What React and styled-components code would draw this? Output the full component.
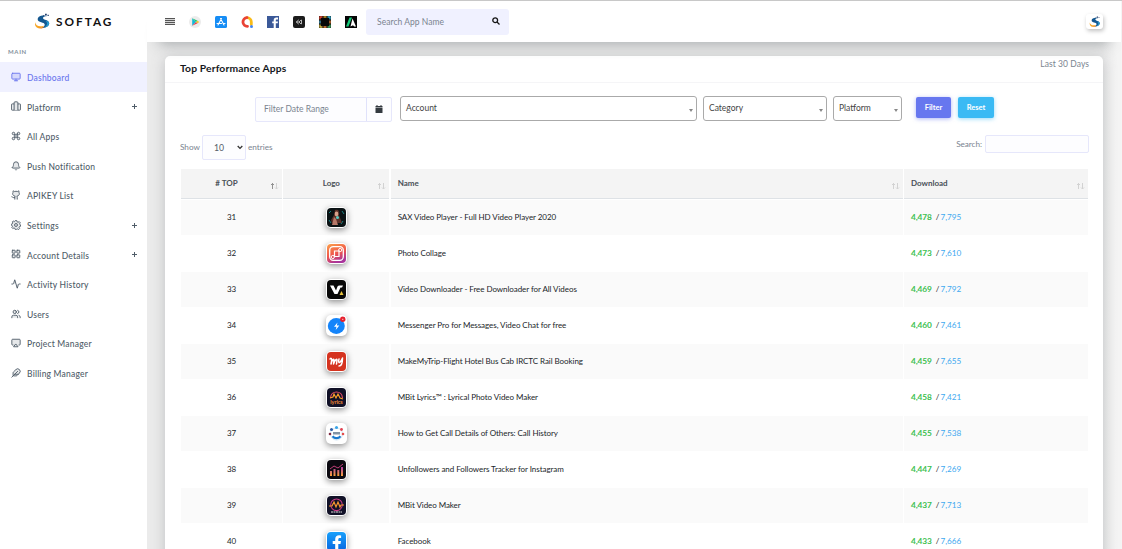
import React from "react";
import styled, { createGlobalStyle, css } from "styled-components";
import { Monitor, Command, Bell, Github, LayoutGrid, Activity, Users, Airplay, Feather } from "lucide-react";

const Global = createGlobalStyle`
  *, *::before, *::after { box-sizing: border-box; }
  body { margin: 0; overflow: hidden; background: #ebebeb; font-family: Lato, "Open Sans", sans-serif; color: #212529; font-size: 8px; }
  button, input, select { font-family: inherit; }
`;

const Page = styled.div`
  display: flex;
  width: 1122px;
  height: 549px;
  overflow: hidden;
  border-top: 1px solid #c8c8c8;
`;
const Sidebar = styled.aside`
  width: 147px;
  flex: none;
  background: #fff;
`;
const Brand = styled.div`
  display: flex;
  align-items: center;
  height: 41px;
  padding: 0 0 0 34px;
  gap: 5px;
`;
const BrandName = styled.span`
  font-size: 11.8px;
  font-weight: 700;
  letter-spacing: 2px;
  color: #111;
  line-height: 16px;
`;
const MenuTitle = styled.div`
  height: 20px;
  padding: 5px 0 0 8px;
  font-size: 6px;
  line-height: 10px;
  font-weight: 700;
  letter-spacing: 0.65px;
  color: #84909c;
`;
const MenuItem = styled.a`
  display: flex;
  align-items: center;
  height: 29.6px;
  padding: 2px 9px 0 11px;
  gap: 6px;
  color: ${(p) => (p.$active ? "#6a75ee" : "#505d69")};
  background: ${(p) => (p.$active ? "#f0f1ff" : "transparent")};
  font-size: 8.5px;
  font-weight: 500;
  letter-spacing: 0.2px;
  svg { flex: none; margin-bottom: 2px; fill: ${(p) => (p.$active ? "#d5d8fb" : "#e6e8ea")}; }
`;
const MenuLabel = styled.span`
  flex: 1;
  padding-top: 0.3px;
  white-space: nowrap;
`;
const Plus = styled.i`
  width: 5px;
  height: 5px;
  margin: 0 1px 1px 0;
  background: linear-gradient(#505d69, #505d69) center / 5px 1px no-repeat, linear-gradient(#505d69, #505d69) center / 1px 5px no-repeat;
`;
const Main = styled.main`
  display: flex;
  flex-direction: column;
  flex: 1;
  min-width: 0;
  border-right: 1px solid #f5f5f5;
`;
const Topbar = styled.header`
  display: flex;
  align-items: center;
  flex: none;
  position: relative;
  height: 41px;
  padding: 0 17px 0 18px;
  background: #fff;
  box-shadow: 0 14px 14px -12px rgba(80, 88, 94, 0.45);
`;
const Apps = styled.nav`
  display: flex;
  align-items: center;
  gap: 14px;
  svg { display: block; }
`;
const Burger = styled.span`
  width: 10px;
  height: 7px;
  margin-right: 0;
  background: repeating-linear-gradient(#555 0 1px, #d5d5d5 1px 2px);
`;
const TopSearch = styled.label`
  display: flex;
  align-items: center;
  justify-content: space-between;
  width: 143px;
  height: 26px;
  margin-left: 9px;
  padding: 0 9px 0 11px;
  border-radius: 3px;
  background: #f0f1ff;
  font-size: 8.5px;
  letter-spacing: 0.04px;
  color: #7b8490;
  svg { margin-bottom: 1px; }
`;
const Profile = styled.span`
  display: grid;
  place-items: center;
  width: 17px;
  height: 15px;
  margin: 0 1px 0 auto;
  border-radius: 3px;
  background: #fff;
  box-shadow: 1px 2px 4px rgba(0, 0, 0, 0.25);
`;
const Content = styled.section`
  flex: 1;
  min-height: 0;
  padding: 14px 18px 0;
  background: linear-gradient(90deg, #ebebeb 0 955px, #f4f4f4 970px);
`;
const Card = styled.div`
  height: 520px;
  border-radius: 5px;
  background: #fff;
  box-shadow: 0 2px 14px rgba(110, 115, 120, 0.34);
`;
const CardHead = styled.div`
  display: flex;
  justify-content: space-between;
  height: 27px;
  padding: 0 14px 0 15px;
  border-bottom: 1px solid #f5f5f7;
`;
const CardTitle = styled.h1`
  margin: 0;
  font-size: 10.3px;
  line-height: 25px;
  font-weight: 700;
  letter-spacing: 0.14px;
  color: #16181c;
`;
const Period = styled.span`
  font-size: 8.5px;
  line-height: 17px;
  letter-spacing: 0.06px;
  color: #7b8490;
`;
const Filters = styled.div`
  display: flex;
  height: 38px;
  padding: 13px 0 0 90px;
`;
const DateField = styled.div`
  display: flex;
  width: 137px;
  height: 25px;
  margin: 1px 8px 0 0;
  border: 1px solid #e6e7fb;
  border-radius: 2px;
  background: #fdfdff;
  color: #7b8490;
  font-size: 8.5px;
  line-height: 23px;
`;
const DateText = styled.span`
  flex: 1;
  padding-left: 8px;
`;
const DateButton = styled.span`
  display: grid;
  place-items: center;
  width: 25px;
  padding-bottom: 1px;
  border-left: 1px solid #e0e2fb;
`;
const Select = styled.div`
  display: flex;
  align-items: center;
  justify-content: space-between;
  width: ${(p) => p.$w}px;
  height: 25px;
  margin-right: ${(p) => p.$gap}px;
  padding: 0 3.5px 1px 5px;
  border: 1px solid #aaa;
  border-radius: 3px;
  font-size: 8.5px;
  color: #444;
`;
const Caret = styled.i`
  margin-top: 4px;
  border: 2.5px solid transparent;
  border-top: 3.5px solid #888;
  border-bottom: 0;
`;
const Button = styled.button`
  width: ${(p) => p.$w}px;
  height: 21px;
  margin: 1px ${(p) => p.$gap || 0}px 0 0;
  padding: 0 0 1px;
  border: 0;
  border-radius: 2px;
  background: ${(p) => p.$bg};
  box-shadow: 0 1px 4px ${(p) => p.$bg}88;
  color: #fff;
  font-size: 7.5px;
  font-weight: 700;
`;
const Controls = styled.div`
  display: flex;
  align-items: flex-start;
  height: 48px;
  padding: 14px 14px 0 15px;
  color: #7b8490;
  font-size: 8.2px;
  line-height: 25px;
`;
const Length = styled.span`
  display: flex;
  align-items: center;
  justify-content: space-between;
  width: 44px;
  height: 25px;
  margin: 0 2px 0 2px;
  padding: 0 2px 0 11px;
  border: 1px solid #e6e7fb;
  border-radius: 2px;
  background: #fdfdff;
  color: #555e68;
  font-size: 8.7px;
`;
const SearchLabel = styled.span`
  margin: -3px 3px 0 auto;
  letter-spacing: -0.05px;
`;
const SearchBox = styled.input`
  width: 104px;
  height: 18px;
  border: 1px solid #e6e7fb;
  border-radius: 2px;
  background: #fdfdff;
`;
const Table = styled.div`
  display: grid;
  row-gap: 1px;
  margin: 0 15px 0 16px;
`;
const Row = styled.div`
  display: grid;
  grid-template-columns: 101px 106px 512px 184px;
  column-gap: 1.33px;
  height: ${(p) => (p.$head ? 30 : 35)}px;
`;
const Cell = styled.div`
  display: flex;
  align-items: center;
  justify-content: ${(p) => (p.$center ? "center" : "flex-start")};
  position: relative;
  padding: 0 7px ${(p) => (p.$media ? 0 : 2)}px;
  white-space: pre;
  background: ${(p) => (p.$odd ? "#fafafa" : "#fff")};
  color: #212529;
  font-size: 8px;
  letter-spacing: -0.06px;
  ${(p) => p.$head && css`
    background: #f4f4f4;
    border-bottom: 1px solid #dee2e6;
    color: #495057;
    font-weight: 700;
    letter-spacing: 0;
    padding-right: ${p.$center ? 17 : 7}px;
  `}
`;
const Sort = styled.span`
  position: absolute;
  right: 3px;
  bottom: 8px;
  display: flex;
`;
const Tile = styled.span`
  display: block;
  width: 21px;
  height: 21px;
  padding: 1px;
  border-radius: 5px;
  background: #fff;
  box-shadow: 0 2px 6px rgba(0, 0, 0, 0.42);
  svg { display: block; border-radius: 4px; }
`;
const Got = styled.b`
  color: #3cbf50;
  font-size: 8.3px;
`;
const Slash = styled.span`
  margin: 0 1.3px 0 3.8px;
`;
const Total = styled.span`
  color: #3fa9f0;
  font-size: 8.2px;
`;

const Logo = ({ size = 17 }) => (
  <svg width={size} height={size} viewBox="0 0 17 17">
    <path d="M13 3.200C8.500 1.700 3.700 3.200 3.700 6.400c0 3.200 7 2.500 7 5 0 1.800-1.500 2.800-3.500 3.300 4 .8 8-1.200 8-4.400C15.200 6.600 9 7.200 9 5c0-1.300 2-1.900 4-1.800z" fill="#14578f" />
    <path d="M11 7.700c3 1.300 2.700 4.800-.8 6.800 3-.3 5-2 5-4.200C15.200 8.700 13.500 7.900 11 7.700z" fill="#2397cc" />
    <path d="M1.200 9.200c.5 3.200 3.500 5 8.600 3.500-1 2.500-6 3.800-8 .8-.9-1.300-.9-2.900-.6-4.300z" fill="#f6a524" />
    <path d="M4 14.500c2 .8 4.800.2 6.300-1.500-.5 2.500-3.800 3.500-6.300 1.500z" fill="#ee7d23" />
    <path d="M11 .8h1.800v1.600H11zM13.500 1.800h1.300V3h-1.300zM9.300 2h1v1h-1z" fill="#23406f" />
  </svg>
);

const Luggage = (p) => (
  <svg width={p.size} height={p.size} viewBox="0 0 24 24" stroke="currentColor" strokeWidth={p.strokeWidth} strokeLinejoin="round">
    <rect x="1" y="7" width="22" height="15" rx="2" />
    <path d="M7.500 22V4a2 2 0 0 1 2-2h5a2 2 0 0 1 2 2v18" />
  </svg>
);

const Gear = (p) => (
  <svg width={p.size} height={p.size} viewBox="0 0 24 24" stroke="currentColor" strokeWidth={p.strokeWidth} strokeLinejoin="round">
    <path d="M10 1.500h4l.7 3 2.300 1 2.700-1.700 2.500 2.700-1.500 2.600.8 2.200 1.500.7v3l-2.600.8-1 2.200 1.300 2.500-2.500 2.500-2.600-1.500-2 .9L13 22.500h-3l-.8-2.600-2.200-.9L4.300 20.500 2 18l1.500-2.500-.8-2.200L.8 12.500V10l2.400-1 1-2.200L3 4.500 5.500 2.500 8 4z" />
    <circle cx="12" cy="12" r="3.500" />
  </svg>
);

const topIcons = [
  <g><circle cx="6" cy="6" r="6" fill="#ececec" /><path d="M3.200 2.200v7.600L7 6z" fill="#14b8d8" /><path d="M3.200 2.200L7 6l1.600-1.200z" fill="#20c46b" /><path d="M3.200 9.800L7 6l1.600 1.200z" fill="#ed3e50" /><path d="M7 6l1.600-1.200L10.300 6 8.600 7.200z" fill="#f7c52b" /></g>,
  <g><rect width="12" height="12" rx="1.500" fill="#168df5" /><path d="M6.500 2.500L3 9M5.500 2.500L9 9M2 7.500h4.500M8.200 7.500H10" stroke="#fff" strokeWidth="1.100" strokeLinecap="round" /></g>,
  <g fill="none" strokeWidth="2.800" strokeLinecap="round"><path d="M10.300 8.500V6A4.300 4.300 0 0 0 6 1.700" stroke="#f9bb16" /><path d="M6 1.700A4.300 4.300 0 1 0 6.500 10.300" stroke="#e94335" /><circle cx="10.500" cy="10.500" r="1.500" fill="#4285f4" /></g>,
  <g><rect width="12" height="12" fill="#3b5998" /><path d="M6.700 12V7.300H5.200V5.500h1.500V4.200c0-1.800 1-2.700 2.700-2.700H11v1.900H9.800c-.8 0-1 .3-1 .9v1.200H11l-.3 1.800H8.800V12z" fill="#fff" /></g>,
  <g><rect width="12" height="12" rx="2" fill="#1c1c1c" /><path d="M3.300 6L5.800 3.800M3.300 6l2.500 2.200M3.300 6H6l2.300-2.200M6 6l2.200 2.200M8.500 4v4" fill="none" stroke="#ddd" strokeWidth=".8" /></g>,
  <g fill="none" strokeWidth="1.300"><rect width="12" height="12" fill="#080808" /><path d="M1 3.500V1h2.500" stroke="#e84a35" /><path d="M4.500 1h3" stroke="#f2b632" /><path d="M8.500 1H11v2.500" stroke="#33b4d8" /><path d="M11 4.500v3M4.500 11h3" stroke="#e9843b" /><path d="M11 8.500V11H8.500" stroke="#4ab36a" /><path d="M1 4.500v3" stroke="#4aa6c8" /><path d="M1 8.500V11h2.500" stroke="#d9c047" /></g>,
  <g><rect width="12" height="12" fill="#050505" /><path d="M1 10.500L4.500 1.500H7L3.500 10.500z" fill="#16cc7a" /><path d="M7.500 2.500l3.500 8H9.200L8 9.200l-2.500 1.300z" fill="#fff" /></g>,
];

const appIcons = {
  sax: <g><rect width="19" height="19" fill="#0a1214" /><path d="M2 5l2-2M2 12l2 3M15 3l2 3M16 13l-2 3" stroke="#167f82" /><path d="M8 2c3-1 5 1 4 5l3 8H5l-1-3 3-5z" fill="#5a3029" /><ellipse cx="9.500" cy="6" rx="1.800" ry="2.400" fill="#d7a08a" /><path d="M7 9l2 2 2 6H5z" fill="#b67868" /><circle cx="10.500" cy="9.500" r="1.500" fill="#55c9c2" /></g>,
  collage: <g><defs><linearGradient id="cg" x2=".4" y2="1"><stop stopColor="#fba14a" /><stop offset=".6" stopColor="#ef554c" /><stop offset="1" stopColor="#a9359b" /></linearGradient></defs><rect width="19" height="19" fill="url(#cg)" /><rect x="2.700" y="2.700" width="13.600" height="13.600" rx="3.500" fill="none" stroke="#fff" strokeWidth="1.300" /><path d="M7.500 12.500V7h4.500v5.500H7" fill="none" stroke="#fff" strokeWidth="1.200" /><circle cx="13.200" cy="6" r="1.600" fill="none" stroke="#fff" /><circle cx="5.800" cy="13" r="1.600" fill="none" stroke="#fff" /></g>,
  video: <g><rect width="19" height="19" fill="#080808" /><path d="M3 5.500h3.500L9 10.500l1.500-4q.5-1 2-1H16l-1 2h-1.500L10.500 14H7.500z" fill="#fff" /><path d="M14.500 11l2 4h-4z" fill="#e9c33b" /></g>,
  messenger: <g><rect width="19" height="19" fill="#fff" /><ellipse cx="9.300" cy="10" rx="8.500" ry="7.900" fill="#1484fa" /><path d="M10.500 6.500l-3.500 4.200h2.500L8.700 14l3.600-4.500H9.800z" fill="#fff" /><circle cx="15.800" cy="3.300" r="2.700" fill="#e5202d" /><path d="M15.300 3.300h1" stroke="#fff" strokeWidth="1" /></g>,
  my: <g><rect width="19" height="19" fill="#d5331f" /><path d="M3 7c2-2 2 1 1 5 1-4 3-6 3-4l-.5 4C8 8 10 6 10 8l-.5 4M12 7c-1 3 0 5 2 2l1.500-3c0 5-1 8-3.500 8" fill="none" stroke="#fff" strokeWidth="1.500" strokeLinecap="round" strokeLinejoin="round" /></g>,
  lyrics: <g><rect width="19" height="19" fill="#111127" /><path d="M3.500 10C4 2 15 2 15.500 10" fill="none" stroke="#e24b67" strokeWidth="1.200" /><path d="M3 10l3-1 1-3 2 4 2-4 2 4 3 1" fill="none" stroke="#fa9e2a" strokeWidth="1.200" /><text x="9.500" y="16" textAnchor="middle" fontSize="5.500" fontWeight="700" fill="#ef8a34">lyrics</text></g>,
  call: <g><rect width="19" height="19" fill="#fff" /><circle cx="9.500" cy="10" r="6" fill="none" stroke="#cce4f4" /><circle cx="9.500" cy="3.500" r="1.500" fill="#39a5e8" /><circle cx="4.500" cy="5.500" r="1.500" fill="#2c5ca8" /><circle cx="14.500" cy="5.500" r="1.400" fill="#e24352" /><circle cx="3" cy="10" r="1.300" fill="#802b42" /><circle cx="16" cy="10" r="1.300" fill="#e34e4e" /><path d="M6 8h7v2.500H6z" fill="#8193a5" /><path d="M5.500 12.300c2.200 2.500 5.800 2.500 8 0" fill="none" stroke="#1978ce" strokeWidth="2.200" /></g>,
  follow: <g><defs><linearGradient id="fg" x2="0" y2="1"><stop stopColor="#b137a6" /><stop offset="1" stopColor="#faa336" /></linearGradient></defs><rect width="19" height="19" fill="#0b0910" /><path d="M3 11h2v5H3zM6.500 9h2v7h-2zM10.300 10h2v6h-2zM14 7h2v9h-2z" fill="url(#fg)" /><path d="M3 9l4-3 4 2 5-4" fill="none" stroke="#d44583" strokeWidth=".9" /></g>,
  mbit: <g><rect width="19" height="19" fill="#111127" /><circle cx="9.500" cy="8.800" r="5.800" fill="none" stroke="#c63c86" strokeWidth="1.100" /><path d="M2 10h3l2-4 2 5 2-5 2 5 1-2h3" fill="none" stroke="#f5952f" strokeWidth="1.200" /><path d="M4 16h11" stroke="#ddd" strokeDasharray="2 .5" /></g>,
  facebook: <g><defs><linearGradient id="fb" x2="0" y2="1"><stop stopColor="#18a0fb" /><stop offset="1" stopColor="#0866e0" /></linearGradient></defs><rect width="19" height="19" fill="url(#fb)" /><path d="M8.200 19v-7H5.700V9h2.500V7.300c0-2.600 1.500-4 3.900-4l2 .2V6h-1.300c-1.200 0-1.500.7-1.500 1.500V9H14l-.5 3h-2.200v7z" fill="#fff" /></g>,
};

const menu = [
  ["Dashboard", Monitor], ["Platform", Luggage, true], ["All Apps", Command], ["Push Notification", Bell],
  ["APIKEY List", Github], ["Settings", Gear, true], ["Account Details", LayoutGrid, true],
  ["Activity History", Activity], ["Users", Users], ["Project Manager", Airplay], ["Billing Manager", Feather],
];

const rows = [
  [31, "sax", "SAX Video Player - Full HD Video Player 2020", "4,478", "7,795"],
  [32, "collage", "Photo Collage", "4,473", "7,610"],
  [33, "video", "Video Downloader - Free Downloader for All Videos", "4,469", "7,792"],
  [34, "messenger", "Messenger Pro for Messages, Video Chat for free", "4,460", "7,461"],
  [35, "my", "MakeMyTrip-Flight Hotel Bus Cab IRCTC Rail Booking", "4,459", "7,655"],
  [36, "lyrics", "MBit Lyrics™ : Lyrical Photo Video Maker", "4,458", "7,421"],
  [37, "call", "How to Get Call Details of Others: Call History", "4,455", "7,538"],
  [38, "follow", "Unfollowers and Followers Tracker for Instagram", "4,447", "7,269"],
  [39, "mbit", "MBit Video Maker", "4,437", "7,713"],
  [40, "facebook", "Facebook", "4,433", "7,666"],
];

const SortMark = ({ active }) => (
  <Sort>
    <svg width="9" height="8" viewBox="0 0 9 8" fill="none">
      <path d="M2.500 7V1.500M1 3l1.500-1.500L4 3" stroke={active ? "#777" : "#c9c9c9"} strokeWidth=".8" />
      <path d="M6.500 1v5.500M5 5.500L6.500 7 8 5.500" stroke="#c9c9c9" strokeWidth=".8" />
    </svg>
  </Sort>
);

export default function App() {
  return (
    <>
      <Global />
      <Page>
        <Sidebar>
          <Brand><Logo /><BrandName>SOFTAG</BrandName></Brand>
          <MenuTitle>MAIN</MenuTitle>
          {menu.map(([label, Icon, more], i) => (
            <MenuItem key={label} $active={i === 0}>
              <Icon size={10} strokeWidth={2.2} />
              <MenuLabel>{label}</MenuLabel>
              {more && <Plus />}
            </MenuItem>
          ))}
        </Sidebar>
        <Main>
          <Topbar>
            <Apps>
              <Burger />
              {topIcons.map((icon, i) => <svg key={i} width="12" height="12" viewBox="0 0 12 12">{icon}</svg>)}
            </Apps>
            <TopSearch>
              Search App Name
              <svg width="8" height="8" viewBox="0 0 8 8" fill="none" stroke="#151515" strokeWidth="1.300"><circle cx="3.200" cy="3.200" r="2.400" /><path d="M5 5l2.500 2.500" /></svg>
            </TopSearch>
            <Profile><Logo size={12} /></Profile>
          </Topbar>
          <Content>
            <Card>
              <CardHead><CardTitle>Top Performance Apps</CardTitle><Period>Last 30 Days</Period></CardHead>
              <Filters>
                <DateField>
                  <DateText>Filter Date Range</DateText>
                  <DateButton><svg width="8" height="8" viewBox="0 0 8 8"><path d="M1.500 0h1v1h3V0h1v1H7.500v1.300h-7V1h1zM.5 2.800h7V7.500a.5.5 0 0 1-.5.500H1a.5.5 0 0 1-.5-.5z" fill="#343a40" /></svg></DateButton>
                </DateField>
                <Select $w={297} $gap={6}>Account<Caret /></Select>
                <Select $w={124} $gap={6}>Category<Caret /></Select>
                <Select $w={69} $gap={14}>Platform<Caret /></Select>
                <Button $w={35} $bg="#6777ef" $gap={7}>Filter</Button>
                <Button $w={36} $bg="#3abaf4">Reset</Button>
              </Filters>
              <Controls>
                Show
                <Length>10<svg width="6" height="5" viewBox="0 0 6 5" fill="none" stroke="#333" strokeWidth="1.300"><path d="M.7 1L3 3.400 5.300 1" /></svg></Length>
                entries
                <SearchLabel>Search:</SearchLabel>
                <SearchBox aria-label="Search" />
              </Controls>
              <Table>
                <Row $head>
                  <Cell $head $center># TOP<SortMark active /></Cell>
                  <Cell $head $center>Logo<SortMark /></Cell>
                  <Cell $head>Name<SortMark /></Cell>
                  <Cell $head>Download<SortMark /></Cell>
                </Row>
                {rows.map(([n, icon, name, got, total], i) => (
                  <Row key={n}>
                    <Cell $odd={i % 2 === 0} $center>{n}</Cell>
                    <Cell $odd={i % 2 === 0} $center $media><Tile><svg width="19" height="19" viewBox="0 0 19 19">{appIcons[icon]}</svg></Tile></Cell>
                    <Cell $odd={i % 2 === 0}>{name}</Cell>
                    <Cell $odd={i % 2 === 0}><Got>{got}</Got><Slash>/</Slash><Total>{total}</Total></Cell>
                  </Row>
                ))}
              </Table>
            </Card>
          </Content>
        </Main>
      </Page>
    </>
  );
}
